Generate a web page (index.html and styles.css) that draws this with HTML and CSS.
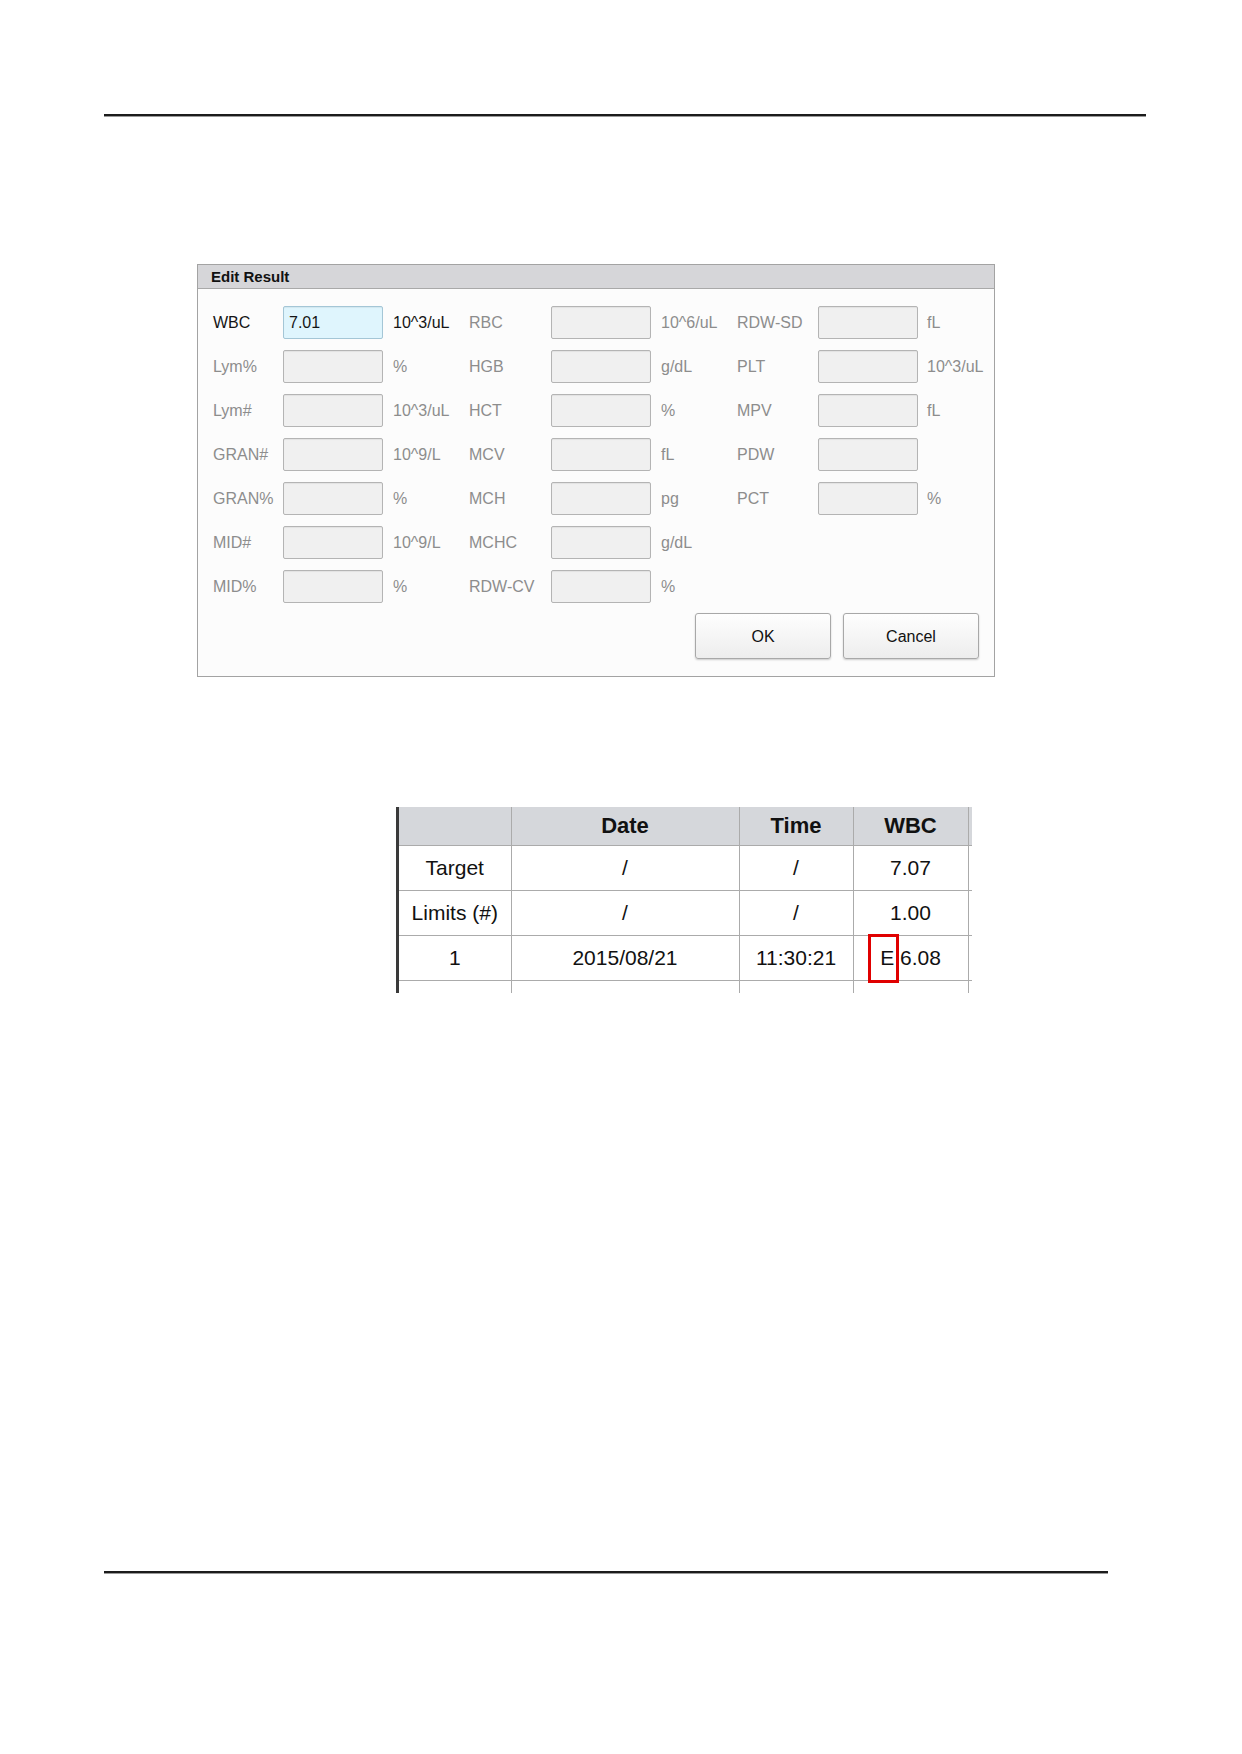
FILE: index.html
```html
<!DOCTYPE html>
<html>

<head>
    <meta charset="utf-8">
    <meta name="viewport" content="width=device-width">
    <title>Edit Result</title>
    <link rel="stylesheet" href="styles.css">
</head>

<body>
    <div class="page">

        <div class="rule rule-top"></div>

        <!-- edit result dialog -->
        <div class="dialog">
            <div class="dialog-title">Edit Result</div>
            <div class="dialog-body">
                <div class="fields">
                    <span class="lbl on">WBC</span>
                    <span class="box active">7.01</span>
                    <span class="unit on">10^3/uL</span>
                    <span class="lbl">RBC</span>
                    <span class="box"></span>
                    <span class="unit">10^6/uL</span>
                    <span class="lbl">RDW-SD</span>
                    <span class="box"></span>
                    <span class="unit u3">fL</span>

                    <span class="lbl">Lym%</span>
                    <span class="box"></span>
                    <span class="unit">%</span>
                    <span class="lbl">HGB</span>
                    <span class="box"></span>
                    <span class="unit">g/dL</span>
                    <span class="lbl">PLT</span>
                    <span class="box"></span>
                    <span class="unit u3">10^3/uL</span>

                    <span class="lbl">Lym#</span>
                    <span class="box"></span>
                    <span class="unit">10^3/uL</span>
                    <span class="lbl">HCT</span>
                    <span class="box"></span>
                    <span class="unit">%</span>
                    <span class="lbl">MPV</span>
                    <span class="box"></span>
                    <span class="unit u3">fL</span>

                    <span class="lbl">GRAN#</span>
                    <span class="box"></span>
                    <span class="unit">10^9/L</span>
                    <span class="lbl">MCV</span>
                    <span class="box"></span>
                    <span class="unit">fL</span>
                    <span class="lbl">PDW</span>
                    <span class="box"></span>
                    <span class="unit u3"></span>

                    <span class="lbl">GRAN%</span>
                    <span class="box"></span>
                    <span class="unit">%</span>
                    <span class="lbl">MCH</span>
                    <span class="box"></span>
                    <span class="unit">pg</span>
                    <span class="lbl">PCT</span>
                    <span class="box"></span>
                    <span class="unit u3">%</span>

                    <span class="lbl">MID#</span>
                    <span class="box"></span>
                    <span class="unit">10^9/L</span>
                    <span class="lbl">MCHC</span>
                    <span class="box"></span>
                    <span class="unit">g/dL</span>
                    <span></span><span></span><span></span>

                    <span class="lbl">MID%</span>
                    <span class="box"></span>
                    <span class="unit">%</span>
                    <span class="lbl">RDW-CV</span>
                    <span class="box"></span>
                    <span class="unit">%</span>
                    <span></span><span></span><span></span>
                </div>

                <div class="actions">
                    <button class="btn">OK</button>
                    <button class="btn">Cancel</button>
                </div>
            </div>
        </div>

        <!-- qc results table -->
        <div class="qc">
            <table class="qc-table">
                <colgroup>
                    <col class="c-no">
                    <col class="c-date">
                    <col class="c-time">
                    <col class="c-wbc">
                    <col class="c-more">
                </colgroup>
                <thead>
                    <tr>
                        <th></th>
                        <th>Date</th>
                        <th>Time</th>
                        <th>WBC</th>
                        <th></th>
                    </tr>
                </thead>
                <tbody>
                    <tr>
                        <td>Target</td>
                        <td>/</td>
                        <td>/</td>
                        <td>7.07</td>
                        <td></td>
                    </tr>
                    <tr>
                        <td>Limits (#)</td>
                        <td>/</td>
                        <td>/</td>
                        <td>1.00</td>
                        <td></td>
                    </tr>
                    <tr>
                        <td>1</td>
                        <td>2015/08/21</td>
                        <td>11:30:21</td>
                        <td><span class="flag">E</span> 6.08</td>
                        <td></td>
                    </tr>
                    <tr>
                        <td></td>
                        <td></td>
                        <td></td>
                        <td></td>
                        <td></td>
                    </tr>
                </tbody>
            </table>
        </div>

        <div class="rule rule-bottom"></div>

    </div>
</body>

</html>
```

FILE: styles.css
```css
body {
    margin: 0;
    background: #fff;
    font-family: "Liberation Sans", Arial, sans-serif;
}

.page {
    padding: 114px 0 0 104px;
}

.rule {
    height: 2px;
    background: #1c1c1c;
    border-bottom: 1px solid #9a9a9a;
}

.rule-top {
    width: 1042px;
}

.rule-bottom {
    width: 1004px;
    margin-top: 578px;
}

/* dialog */

.dialog {
    box-sizing: border-box;
    width: 798px;
    margin: 147px 0 0 93px;
    border: 1px solid #a3a3a3;
    background: #fcfcfc;
}

.dialog-title {
    height: 23px;
    line-height: 24px;
    padding-left: 13px;
    background: #d6d6d9;
    border-bottom: 1px solid #a9a9a9;
    font-size: 15px;
    font-weight: bold;
    color: #111;
}

.dialog-body {
    padding: 17px 15px 17px 15px;
}

.fields {
    display: grid;
    grid-template-columns: 70px 100px 86px 82px 100px 86px 81px 100px 1fr;
    grid-auto-rows: 33px;
    row-gap: 11px;
    align-items: center;
    font-size: 16px;
    color: #8d8d8d;
}

.lbl.on,
.unit.on {
    color: #151515;
}

.unit {
    padding-left: 10px;
}

.unit.u3 {
    padding-left: 9px;
}

.box {
    box-sizing: border-box;
    height: 33px;
    background: #f0f0f0;
    border: 1px solid #b4b4b4;
    border-radius: 2px;
    box-shadow: inset 0 1px 1px rgba(0, 0, 0, 0.06);
}

.box.active {
    background: #dff5fd;
    border-color: #a4c6d6;
    color: #151515;
    padding: 7px 0 0 5px;
}

.actions {
    display: flex;
    justify-content: flex-end;
    gap: 12px;
    margin-top: 10px;
}

.btn {
    box-sizing: border-box;
    width: 136px;
    height: 46px;
    padding-top: 3px;
    border: 1px solid #a8a8a8;
    border-radius: 3px;
    background: linear-gradient(#fefefe, #ededed);
    box-shadow: 0 1px 2px rgba(0, 0, 0, 0.2);
    font-family: "Liberation Sans", Arial, sans-serif;
    font-size: 16px;
    color: #111;
}

/* qc table */

.qc {
    width: 573px;
    height: 186px;
    margin: 130px 0 0 292px;
    overflow: hidden;
    border-left: 3px solid #3a3a3a;
}

.qc-table {
    width: 669px;
    table-layout: fixed;
    border-collapse: collapse;
    font-size: 21px;
    color: #111;
}

.c-no { width: 112px; }
.c-date { width: 228px; }
.c-time { width: 114px; }
.c-wbc { width: 115px; }
.c-more { width: 100px; }

.qc-table th,
.qc-table td {
    padding: 0;
    text-align: center;
    border-right: 1px solid #ababab;
    border-bottom: 1px solid #ababab;
}

.qc-table th {
    height: 38px;
    background: #d5d7db;
    font-size: 22px;
    font-weight: bold;
}

.qc-table td {
    height: 44px;
}

.flag {
    position: relative;
}

.flag::after {
    content: "";
    position: absolute;
    left: -12px;
    top: 50%;
    width: 31px;
    height: 49px;
    margin-top: -24px;
    box-sizing: border-box;
    border: 3px solid #e00000;
}
```
